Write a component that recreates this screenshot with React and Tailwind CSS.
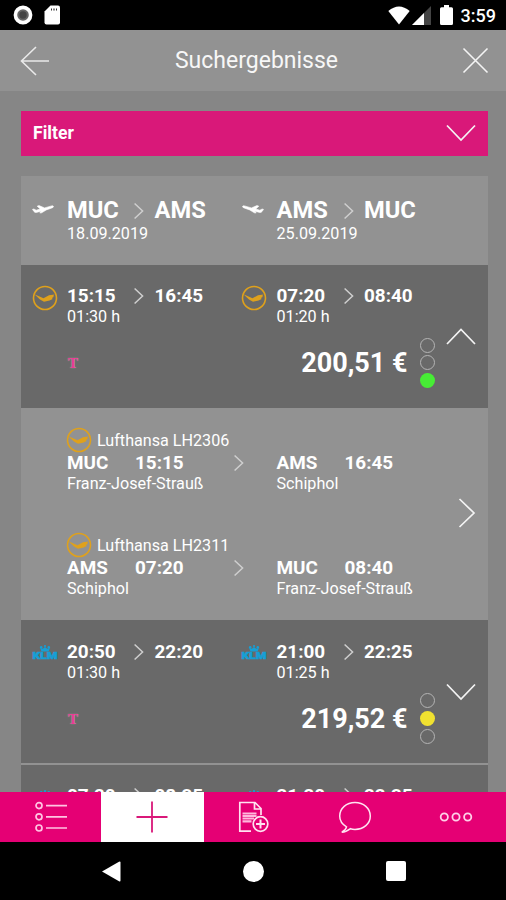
import React from 'react';

const RESULTS = [
  {
    airline: 'lufthansa',
    price: '200,51 €',
    rating: 'green',
    open: true,
    legs: [
      { dep: '15:15', arr: '16:45', duration: '01:30 h' },
      { dep: '07:20', arr: '08:40', duration: '01:20 h' },
    ],
  },
  {
    airline: 'klm',
    price: '219,52 €',
    rating: 'yellow',
    open: false,
    legs: [
      { dep: '20:50', arr: '22:20', duration: '01:30 h' },
      { dep: '21:00', arr: '22:25', duration: '01:25 h' },
    ],
  },
  {
    airline: 'klm',
    price: '219,52 €',
    rating: 'yellow',
    open: false,
    legs: [
      { dep: '07:20', arr: '08:35', duration: '01:15 h' },
      { dep: '21:20', arr: '22:35', duration: '01:15 h' },
    ],
  },
];

const SEGMENTS = [
  {
    flight: 'Lufthansa LH2306',
    from: { code: 'MUC', time: '15:15', name: 'Franz-Josef-Strauß' },
    to: { code: 'AMS', time: '16:45', name: 'Schiphol' },
  },
  {
    flight: 'Lufthansa LH2311',
    from: { code: 'AMS', time: '07:20', name: 'Schiphol' },
    to: { code: 'MUC', time: '08:40', name: 'Franz-Josef-Strauß' },
  },
];

function SmallChevron() {
  return (
    <svg width="11" height="18" viewBox="0 0 11 18" fill="none" stroke="#cfcfcf" strokeWidth="1.5">
      <path d="M.6 1.5 8.6 9 .6 16.5" />
    </svg>
  );
}

function BigChevron({ up }) {
  return (
    <svg width="30" height="18" viewBox="0 0 30 18" fill="none" stroke="#f4f4f4" strokeWidth="1.7">
      <path d={up ? 'M1 16 15 1.5 29 16' : 'M1 1.5 15 16 29 1.5'} />
    </svg>
  );
}

function Plane({ landing }) {
  return (
    <svg
      width="22"
      height="12"
      viewBox="0 0 22 12"
      fill="#fff"
      stroke="#fff"
      strokeWidth="0.6"
      className={landing ? '-scale-x-100' : ''}
    >
      <path d="M.5 6.4 1.8 6 4.2 7.2 8.2 6 5.2 3.2 7 2.6 12.6 4.9 19.5 2.9Q21.3 2.5 21.5 3.4 21.5 4.4 19.8 5L14.2 7 9.6 9.8 7.8 10 9.2 8.2 4.4 9.4Q2.8 9.7 2 8.6Z" />
    </svg>
  );
}

function Lufthansa() {
  return (
    <svg width="26" height="26" viewBox="0 0 26 26" fill="none">
      <circle cx="13" cy="13" r="11.5" stroke="#dfa11c" strokeWidth="1.6" />
      <path d="M2.4 9.2 11.5 13.2 17 10.2 22.6 9.6 20.9 11.4 22.5 11.6 19.9 13 20.7 13.9 17.6 15.4 12 16.8 8 14.6Z" fill="#dfa11c" />
    </svg>
  );
}

function Klm() {
  return (
    <svg width="26" height="26" viewBox="0 0 26 26" fill="#169fd6">
      <circle cx="13" cy="6" r="1.1" />
      <circle cx="9.2" cy="7.4" r="1.3" />
      <circle cx="16.8" cy="7.4" r="1.3" />
      <path d="M8.3 8.2 10.8 8.8 13 7 15.2 8.8 17.7 8.2 16.6 11.4H9.4Z" />
      <text
        x="0.5"
        y="19"
        textLength="25"
        lengthAdjust="spacingAndGlyphs"
        stroke="#169fd6"
        strokeWidth="0.5"
        className="font-['Roboto',sans-serif] text-[8.5px] font-black"
      >
        KLM
      </text>
    </svg>
  );
}

function Lights({ rating }) {
  return (
    <div className="flex flex-col gap-[2.7px]">
      <span className="size-[15px] rounded-full border-[1.5px] border-[#b4b4b4]" />
      <span
        className={
          rating === 'yellow'
            ? 'size-[15px] rounded-full bg-[#f0e130]'
            : 'size-[15px] rounded-full border-[1.5px] border-[#b4b4b4]'
        }
      />
      <span
        className={
          rating === 'green'
            ? 'size-[15px] rounded-full bg-[#47ec35]'
            : 'size-[15px] rounded-full border-[1.5px] border-[#b4b4b4]'
        }
      />
    </div>
  );
}

function RouteHeader() {
  const routes = [
    { from: 'MUC', to: 'AMS', date: '18.09.2019' },
    { from: 'AMS', to: 'MUC', date: '25.09.2019' },
  ];
  return (
    <div className="flex h-[88.5px] bg-[#929292] pl-[11px] pt-[20px]">
      {routes.map((r, i) => (
        <div key={r.date} className="grid h-12 w-[209.5px] shrink-0 grid-cols-[35px_67px_20.5px_1fr] grid-rows-[28px_20px]">
          <div className="pt-[7px]">
            <Plane landing={i === 1} />
          </div>
          <div className="text-[23.7px] font-bold leading-[28px]">{r.from}</div>
          <div className="flex items-center pt-0.5">
            <SmallChevron />
          </div>
          <div className="text-[23.7px] font-bold leading-[28px]">{r.to}</div>
          <div className="col-span-2 col-start-2 text-[16.15px] leading-5">{r.date}</div>
        </div>
      ))}
    </div>
  );
}

function ResultRow({ result }) {
  const Logo = result.airline === 'klm' ? Klm : Lufthansa;
  return (
    <div className="h-[143px] shrink-0 bg-[#696969] pl-[11px] pt-[20.8px]">
      <div className="flex">
        {result.legs.map((leg) => (
          <div key={leg.dep} className="grid w-[209.5px] shrink-0 grid-cols-[35px_67px_20.5px_1fr] grid-rows-[22px_20px]">
            <div className="-ml-[0.4px] -mt-[0.8px] h-[22px]">
              <Logo />
            </div>
            <div className="text-[18.9px] font-bold leading-[22px]">{leg.dep}</div>
            <div className="flex items-center">
              <SmallChevron />
            </div>
            <div className="text-[18.9px] font-bold leading-[22px]">{leg.arr}</div>
            <div className="col-span-2 col-start-2 text-[16.15px] leading-5">{leg.duration}</div>
          </div>
        ))}
      </div>
      <div className="flex h-[76px] items-start pr-[12px]">
        <div className="flex-1 pl-[36px] pt-[28px]">
          <div className="w-[10px] text-center font-['Liberation_Serif',serif] text-[15px] font-bold leading-[16px] text-[#ea3c93] [text-shadow:0_0_1px_#ccc]">
            T
          </div>
        </div>
        <div className="pt-[20px] text-[27px] font-bold leading-[32px]">{result.price}</div>
        <div className="ml-[12px] pt-[10.5px]">
          <Lights rating={result.rating} />
        </div>
        <div className="ml-[11px] pt-[0.5px]">
          <BigChevron up={result.open} />
        </div>
      </div>
    </div>
  );
}

function Stop({ stop }) {
  return (
    <div>
      <div className="flex text-[18.9px] font-bold leading-[22px]">
        <span className="w-[68px]">{stop.code}</span>
        <span>{stop.time}</span>
      </div>
      <div className="whitespace-nowrap text-[16.15px] leading-5">{stop.name}</div>
    </div>
  );
}

function Details() {
  return (
    <div className="flex h-[212.5px] bg-[#929292] pl-[46px] pt-[19.6px]">
      <div className="w-[391px]">
        {SEGMENTS.map((s) => (
          <div key={s.flight} className="h-[105.3px]">
            <div className="flex h-[25px] items-center pt-px">
              <div className="-ml-[1.3px]">
                <Lufthansa />
              </div>
              <span className="pl-[5.3px] pt-px text-[16.15px] leading-5">{s.flight}</span>
            </div>
            <div className="grid grid-cols-[167px_42.5px_1fr]">
              <Stop stop={s.from} />
              <div className="pt-[2px]">
                <SmallChevron />
              </div>
              <Stop stop={s.to} />
            </div>
          </div>
        ))}
      </div>
      <svg width="18" height="30" viewBox="0 0 18 30" fill="none" stroke="#f4f4f4" strokeWidth="1.7" className="mt-[70.5px]">
        <path d="M1.5 1 16 15 1.5 29" />
      </svg>
    </div>
  );
}

function StatusBar() {
  return (
    <div className="flex h-[30px] shrink-0 items-center bg-black pl-[13px] pr-[10px]">
      <svg width="20" height="20" viewBox="0 0 20 20">
        <circle cx="10" cy="10" r="7.6" fill="#666" stroke="#fff" strokeWidth="3.6" />
        <circle cx="10" cy="10" r="3.7" fill="#444" />
      </svg>
      <svg width="17" height="20" viewBox="0 0 17 20" className="ml-[11px]">
        <path d="M6.5.5H14Q16 .5 16 2.5V17.5Q16 19.5 14 19.5H2.5Q.5 19.5.5 17.5V6.5Z" fill="#fff" />
        <path d="M7 3.5H8V5.5H7ZM9.4 3.5H10.6V5.5H9.4ZM12 3.5H13V5.5H12Z" fill="#333" />
      </svg>
      <div className="flex-1" />
      <svg width="22" height="19" viewBox="0 0 22 19" fill="#fff">
        <path d="M.3 5Q11-4 21.7 5L11 18.5Z" />
      </svg>
      <svg width="19" height="19" viewBox="0 0 19 19" className="ml-[2px]">
        <path d="M0 19 19 0V19Z" fill="#444" />
        <path d="M0 19 12 7V19Z" fill="#fff" />
      </svg>
      <svg width="13" height="20" viewBox="0 0 13 20" fill="#fff" className="ml-[9px]">
        <path d="M4 0H9V2.2H11.5Q13 2.2 13 3.7V18.5Q13 20 11.5 20H1.5Q0 20 0 18.5V3.7Q0 2.2 1.5 2.2H4Z" />
      </svg>
      <span className="ml-[8px] pt-[2px] text-[18px] font-medium leading-5">3:59</span>
    </div>
  );
}

function TabBar() {
  return (
    <div className="grid h-[50px] shrink-0 grid-cols-[101px_102.5px_1fr_1fr_1fr] bg-[#e50074]">
      <div className="flex items-center justify-center">
        <svg width="34" height="32" viewBox="0 0 34 32" fill="none" stroke="#ffc4e2" strokeWidth="1.7">
          <circle cx="5" cy="4.6" r="3" />
          <circle cx="5" cy="15.8" r="3" />
          <circle cx="5" cy="27" r="3" />
          <path d="M12 4.6H33M12 15.8H33M12 27H33" />
        </svg>
      </div>
      <div className="flex items-center justify-center bg-white">
        <svg width="32" height="32" viewBox="0 0 32 32" fill="none" stroke="#d91879" strokeWidth="1.8">
          <path d="M16 .5V31.5M.5 16H31.5" />
        </svg>
      </div>
      <div className="flex items-center justify-center">
        <svg width="31" height="32" viewBox="0 0 31 32" fill="none" stroke="#ffe3f1" strokeWidth="1.7">
          <path d="M13 30.2H1.8V1.5H17L23 7.5V14M16.5 1.5V8H23" />
          <path d="M4.5 12.5H18.5M4.5 15H18.5M4.5 17.5H16M4.5 20.3H13.5" strokeWidth="2.2" stroke="#ffb8dc" />
          <circle cx="22.5" cy="23" r="7.3" fill="#e50074" />
          <path d="M22.5 18.5V27.5M18 23H27" strokeWidth="2" />
        </svg>
      </div>
      <div className="flex items-center justify-center">
        <svg width="34" height="33" viewBox="0 0 34 33" fill="none" stroke="#ffe3f1" strokeWidth="1.5">
          <path d="M8.5 25.8C4 23.2 1.7 19.5 1.7 15 1.7 7.2 8.5 1.5 17 1.5S32.3 7.2 32.3 15 25.5 28.4 17 28.4C15.2 28.4 13.8 28.2 12.5 27.7 9.5 30 6.5 31.2 3.8 31.2 6.5 29.8 8 28 8.5 25.8Z" />
        </svg>
      </div>
      <div className="flex items-center justify-center">
        <svg width="34" height="12" viewBox="0 0 34 12" fill="none" stroke="#ffd0e8" strokeWidth="1.8">
          <circle cx="5.3" cy="6" r="3.6" />
          <circle cx="17" cy="6" r="3.6" />
          <circle cx="28.7" cy="6" r="3.6" />
        </svg>
      </div>
    </div>
  );
}

export default function App() {
  return (
    <div className="flex h-[900px] w-[506px] flex-col overflow-hidden bg-[#868686] font-['Roboto',sans-serif] text-white">
      <StatusBar />

      {/* Title bar */}
      <div className="flex h-[61px] shrink-0 items-center justify-between bg-[#929292] pl-[20px] pr-[17px]">
        <svg width="30" height="30" viewBox="0 0 30 30" fill="none" stroke="#e9e9e9" strokeWidth="1.6">
          <path d="M16 1 1.5 15 16 29M1.5 15H29" />
        </svg>
        <h1 className="pl-px text-[23px] leading-7 text-[#f7f7f7]">Suchergebnisse</h1>
        <svg width="27" height="27" viewBox="0 0 27 27" fill="none" stroke="#f4f4f4" strokeWidth="1.6">
          <path d="M1.5 1.5 25.5 25.5M25.5 1.5 1.5 25.5" />
        </svg>
      </div>

      {/* Results */}
      <div className="min-h-0 flex-1 overflow-hidden pl-[21px] pr-[18.5px] pt-[20px]">
        <div className="mb-[20.5px] flex h-[44.5px] items-center justify-between bg-[#d91879] pl-[12px] pr-[12px]">
          <span className="text-[17.6px] font-bold leading-5">Filter</span>
          <BigChevron />
        </div>
        <RouteHeader />
        <ResultRow result={RESULTS[0]} />
        <Details />
        <ResultRow result={RESULTS[1]} />
        <div className="h-[1.5px] bg-[#929292]" />
        <ResultRow result={RESULTS[2]} />
      </div>

      <TabBar />

      {/* System navigation */}
      <div className="flex h-[58px] shrink-0 items-center justify-between bg-black pl-[102px] pr-[100px]">
        <svg width="19" height="21" viewBox="0 0 19 21" fill="#fff">
          <path d="M0 10.5 17 .8Q18.5 0 18.5 1.5V19.5Q18.5 21 17 20.2Z" />
        </svg>
        <div className="size-[21px] rounded-full bg-white" />
        <div className="size-[20px] rounded-[2px] bg-white" />
      </div>
    </div>
  );
}
